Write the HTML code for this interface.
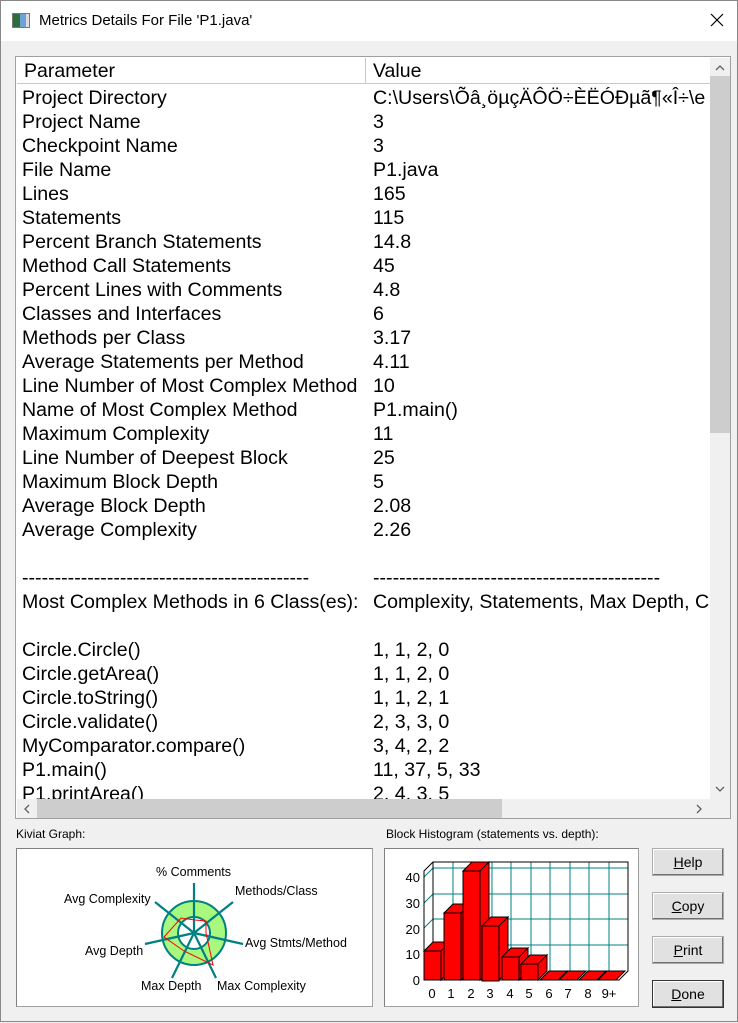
<!DOCTYPE html>
<html><head><meta charset="utf-8"><style>
*{margin:0;padding:0;box-sizing:border-box}
body{width:738px;height:1022px;background:#f0f0f0;font-family:"Liberation Sans",Arial,sans-serif;position:relative;overflow:hidden;border:1px solid #888}
.title{position:absolute;left:0;top:0;width:736px;height:40px;background:#fff;font-size:15px}
.lb{position:absolute;left:14px;top:55px;width:716px;height:763px;border:1px solid #a0a0a0;background:#fff;overflow:hidden}
.hdr{position:absolute;left:1px;top:1px;width:693px;height:26px;background:#fff;border-bottom:1px solid #c8c8c8;font-size:19.5px}
.rows{position:absolute;left:6px;top:29px;font-size:19.6px;line-height:24px;white-space:nowrap}
.rows div{height:24px;position:relative}
.rows span{position:absolute;left:351px}
.vs{position:absolute;left:694px;top:1px;width:20px;height:741px;background:#f0f0f0}
.hs{position:absolute;left:1px;top:742px;width:693px;height:19px;background:#f0f0f0}
.lbl{position:absolute;font-size:12px;color:#000}
.box{position:absolute;background:#fff;border:1px solid #a0a0a0;border-top-color:#808080;border-left-color:#808080}
.btn{position:absolute;left:651px;width:72px;height:28px;background:#e1e1e1;border:1px solid #adadad;box-shadow:inset -1px -1px #707070,inset 1px 1px #fff;font-size:14px;text-align:center;line-height:26px}
</style></head><body>
<div class="title">
<div style="position:absolute;left:11px;top:12px;width:18px;height:15px;border:1px solid #777;background:linear-gradient(90deg,#2a6e3c 0 45%,#6fa0d8 45% 80%,#ddd 80%)"></div>
<div style="position:absolute;left:38px;top:11px">Metrics Details For File 'P1.java'</div>
<svg style="position:absolute;left:709px;top:12px" width="14" height="14"><path d="M1 1L13 13M13 1L1 13" stroke="#000" stroke-width="1.2"/></svg>
</div>
<div class="lb">
<div class="hdr"><div style="position:absolute;left:7px;top:2px">Parameter</div><div style="position:absolute;left:348px;top:0;width:2px;height:25px;border-left:1px solid #c8c8c8;border-right:1px solid #fff"></div><div style="position:absolute;left:356px;top:2px">Value</div></div>
<div class="rows">
<div>Project Directory<span>C:\Users\Õâ¸öµçÄÔÖ÷ÈËÓÐµã¶«Î÷\e</span></div>
<div>Project Name<span>3</span></div>
<div>Checkpoint Name<span>3</span></div>
<div>File Name<span>P1.java</span></div>
<div>Lines<span>165</span></div>
<div>Statements<span>115</span></div>
<div>Percent Branch Statements<span>14.8</span></div>
<div>Method Call Statements<span>45</span></div>
<div>Percent Lines with Comments<span>4.8</span></div>
<div>Classes and Interfaces<span>6</span></div>
<div>Methods per Class<span>3.17</span></div>
<div>Average Statements per Method<span>4.11</span></div>
<div>Line Number of Most Complex Method<span>10</span></div>
<div>Name of Most Complex Method<span>P1.main()</span></div>
<div>Maximum Complexity<span>11</span></div>
<div>Line Number of Deepest Block<span>25</span></div>
<div>Maximum Block Depth<span>5</span></div>
<div>Average Block Depth<span>2.08</span></div>
<div>Average Complexity<span>2.26</span></div>
<div></div>
<div>--------------------------------------------<span>--------------------------------------------</span></div>
<div>Most Complex Methods in 6 Class(es):<span>Complexity, Statements, Max Depth, Calls</span></div>
<div></div>
<div>Circle.Circle()<span>1, 1, 2, 0</span></div>
<div>Circle.getArea()<span>1, 1, 2, 0</span></div>
<div>Circle.toString()<span>1, 1, 2, 1</span></div>
<div>Circle.validate()<span>2, 3, 3, 0</span></div>
<div>MyComparator.compare()<span>3, 4, 2, 2</span></div>
<div>P1.main()<span>11, 37, 5, 33</span></div>
<div>P1.printArea()<span>2, 4, 3, 5</span></div>
</div>
<div class="vs"><svg style="position:absolute;left:5px;top:6px" width="10" height="8"><path d="M1 6L5 2L9 6" stroke="#606060" fill="none" stroke-width="1.3"/></svg>
<div style="position:absolute;left:0;top:18px;width:20px;height:357px;background:#cdcdcd"></div>
<svg style="position:absolute;left:5px;top:727px" width="10" height="8"><path d="M1 2L5 6L9 2" stroke="#606060" fill="none" stroke-width="1.3"/></svg></div>
<div class="hs"><svg style="position:absolute;left:6px;top:5px" width="8" height="10"><path d="M6 1L2 5L6 9" stroke="#606060" fill="none" stroke-width="1.3"/></svg>
<div style="position:absolute;left:20px;top:0;width:465px;height:19px;background:#cdcdcd"></div>
<svg style="position:absolute;left:678px;top:5px" width="8" height="10"><path d="M2 1L6 5L2 9" stroke="#606060" fill="none" stroke-width="1.3"/></svg></div>
<div style="position:absolute;left:694px;top:742px;width:20px;height:19px;background:#f0f0f0"></div>
</div>

<div class="lbl" style="left:15px;top:826px">Kiviat Graph:</div>
<div class="lbl" style="left:385px;top:826px">Block Histogram (statements vs. depth):</div>
<div class="box" style="left:15px;top:847px;width:357px;height:159px"></div>
<div class="box" style="left:383px;top:847px;width:255px;height:159px"></div>
<svg style="position:absolute;left:0;top:0" width="738" height="1022" font-family="Liberation Sans,Arial,sans-serif" font-size="12.5">
<circle cx="193" cy="932" r="24" fill="none" stroke="#a8f880" stroke-width="16"/>
<circle cx="193" cy="932" r="32" fill="none" stroke="#008080" stroke-width="2"/>
<circle cx="193" cy="932" r="16" fill="none" stroke="#008080" stroke-width="2"/>
<g stroke="#008080" stroke-width="2.2">
<line x1="193" y1="932" x2="193" y2="882"/>
<line x1="193" y1="932" x2="232" y2="901"/>
<line x1="193" y1="932" x2="242" y2="943"/>
<line x1="193" y1="932" x2="215" y2="977"/>
<line x1="193" y1="932" x2="171" y2="977"/>
<line x1="193" y1="932" x2="144" y2="943"/>
<line x1="193" y1="932" x2="154" y2="901"/>
</g>
<polygon points="194,919 205,920 205,932 212,964 183,950 163,936 180,917" fill="none" stroke="#f00" stroke-width="1"/>
<text x="155" y="875">% Comments</text>
<text x="234" y="894">Methods/Class</text>
<text x="63" y="902">Avg Complexity</text>
<text x="244" y="946">Avg Stmts/Method</text>
<text x="84" y="954">Avg Depth</text>
<text x="140" y="989">Max Depth</text>
<text x="216" y="989">Max Complexity</text>
<g stroke="#008080" stroke-width="1" fill="none">
<line x1="432" y1="944" x2="627" y2="944"/><line x1="432" y1="918" x2="627" y2="918"/><line x1="432" y1="893" x2="627" y2="893"/><line x1="432" y1="867" x2="627" y2="867"/>
<line x1="423" y1="953" x2="432" y2="944"/><line x1="423" y1="927" x2="432" y2="918"/><line x1="423" y1="902" x2="432" y2="893"/><line x1="423" y1="876" x2="432" y2="867"/>
<line x1="452" y1="861" x2="452" y2="970"/><line x1="471" y1="861" x2="471" y2="970"/><line x1="491" y1="861" x2="491" y2="970"/><line x1="510" y1="861" x2="510" y2="970"/><line x1="530" y1="861" x2="530" y2="970"/><line x1="549" y1="861" x2="549" y2="970"/><line x1="569" y1="861" x2="569" y2="970"/><line x1="588" y1="861" x2="588" y2="970"/><line x1="608" y1="861" x2="608" y2="970"/>
</g>
<path d="M432 970V861H627V970L618 979H423V870L432 861" fill="none" stroke="#000"/>
<g fill="#f00" stroke="#000" stroke-width="1">
<path d="M423 950h17v29h-17z M423 950l9-9h17l-9 9z M440 950l9-9v29l-9 9z"/>
<path d="M443 912h17v67h-17z M443 912l9-9h17l-9 9z M460 912l9-9v67l-9 9z"/>
<path d="M462 870h17v109h-17z M462 870l9-9h17l-9 9z M479 870l9-9v109l-9 9z"/>
<path d="M481 925h17v55h-17z M481 925l9-9h17l-9 9z M498 925l9-9v54l-9 9z"/>
<path d="M501 956h17v23h-17z M501 956l9-9h17l-9 9z M518 956l9-9v23l-9 9z"/>
<path d="M520 963h17v16h-17z M520 963l9-9h17l-9 9z M537 963l9-9v16l-9 9z"/>
<path d="M539 979l9-9h18l-9 9z M558 979l9-9h18l-9 9z M578 979l9-9h18l-9 9z M597 979l9-9h18l-9 9z"/>
</g>
<g font-size="13" text-anchor="end"><text x="419" y="881">40</text><text x="419" y="907">30</text><text x="419" y="933">20</text><text x="419" y="958">10</text><text x="419" y="984">0</text></g>
<g font-size="13" text-anchor="middle"><text x="431" y="997">0</text><text x="450" y="997">1</text><text x="470" y="997">2</text><text x="489" y="997">3</text><text x="509" y="997">4</text><text x="528" y="997">5</text><text x="548" y="997">6</text><text x="567" y="997">7</text><text x="587" y="997">8</text><text x="608" y="997">9+</text></g>
</svg>
<div class="btn" style="top:847px"><u>H</u>elp</div>
<div class="btn" style="top:891px"><u>C</u>opy</div>
<div class="btn" style="top:935px"><u>P</u>rint</div>
<div class="btn" style="top:979px;border:1px solid #333"><u>D</u>one</div>
</body></html>
